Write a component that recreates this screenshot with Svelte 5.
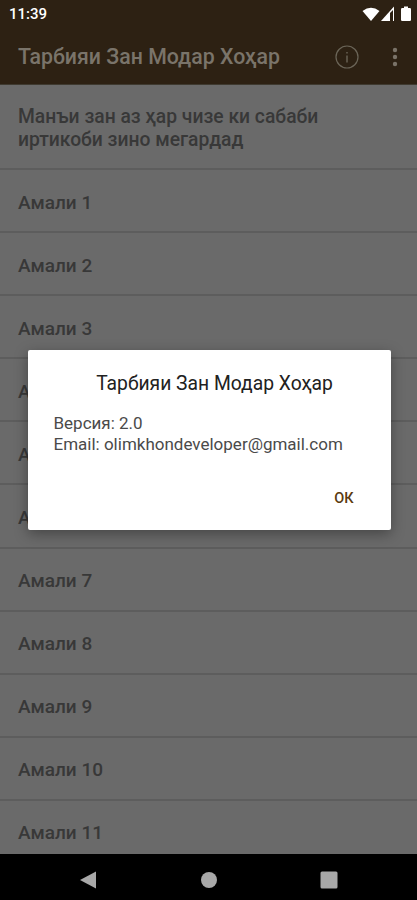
<script>
	const items = ['Амали 1', 'Амали 2', 'Амали 3', 'Амали 4', 'Амали 5', 'Амали 6', 'Амали 7', 'Амали 8', 'Амали 9', 'Амали 10', 'Амали 11'];
</script>

<div class="screen">
	<header>
		<div class="status">
			<span class="time">11:39</span>
			<svg class="status-icons" width="50" height="16" viewBox="0 0 50 16">
				<path d="M0.5 5 Q9 -1.5 17.5 5 L9 15 Z" fill="#fff" />
				<path d="M32 0.5 V15 H19 Z" fill="#fff" />
				<path d="M31 4 V15 H28 V7 Z" fill="#2d2113" />
				<rect x="39" y="2" width="10" height="13" rx="1.2" fill="#fff" />
				<rect x="42" y="0.5" width="4" height="2" fill="#fff" />
			</svg>
		</div>
		<div class="toolbar">
			<span class="title">Тарбияи Зан Модар Хоҳар</span>
			<svg class="info" width="24" height="24" viewBox="0 0 24 24">
				<circle cx="12" cy="12" r="11" fill="none" stroke="#6b6558" stroke-width="1.2" />
				<path d="M12 7 V8.4 M12 10.5 V17.5" stroke="#6b6558" stroke-width="1.4" fill="none" />
			</svg>
			<svg class="more" width="6" height="20" viewBox="0 0 6 20">
				<circle cx="3" cy="3" r="2.2" fill="#7a7368" />
				<circle cx="3" cy="10" r="2.2" fill="#7a7368" />
				<circle cx="3" cy="17" r="2.2" fill="#7a7368" />
			</svg>
		</div>
	</header>

	<ul>
		<li class="first">Манъи зан аз ҳар чизе ки сабаби иртикоби зино мегардад</li>
		{#each items as item}
			<li>{item}</li>
		{/each}
	</ul>

	<nav>
		<svg width="18" height="18" viewBox="0 0 18 18"><path d="M17 0.5 V17.5 L1 9 Z" fill="#a8a8a8" /></svg>
		<svg width="18" height="18" viewBox="0 0 18 18"><circle cx="9" cy="9" r="8" fill="#a8a8a8" /></svg>
		<svg width="18" height="18" viewBox="0 0 18 18"><rect x="0.5" y="0.5" width="17" height="17" rx="1.5" fill="#a8a8a8" /></svg>
	</nav>

	<div class="scrim">
		<div class="dialog">
			<h2>Тарбияи Зан Модар Хоҳар</h2>
			<p>Версия: 2.0<br />Email: olimkhondeveloper@gmail.com</p>
			<div class="actions"><span>ОК</span></div>
		</div>
	</div>
</div>

<style>
	:global(body) {
		margin: 0;
		background: #000;
	}

	.screen {
		position: relative;
		display: flex;
		flex-direction: column;
		width: 417px;
		height: 900px;
		overflow: hidden;
		background: #6a6a6a;
		font-family: Roboto, 'Liberation Sans', sans-serif;
	}

	header {
		flex: none;
		height: 85px;
		background: #2d2113;
		border-bottom: 1px solid #3f3a30;
		box-sizing: border-box;
	}

	.status {
		display: flex;
		align-items: center;
		justify-content: space-between;
		height: 27px;
		padding: 0 5px 0 9px;
	}

	.time {
		font-size: 15px;
		font-weight: 500;
		color: #fff;
	}

	.toolbar {
		display: flex;
		align-items: center;
		height: 57px;
		padding: 2px 19px 0 18px;
		box-sizing: border-box;
	}

	.title {
		flex: 1;
		font-size: 21.3px;
		font-weight: 500;
		color: #7a746a;
	}

	.more {
		margin-left: 33px;
	}

	ul {
		flex: 1;
		min-height: 0;
		overflow: hidden;
		margin: 0;
		padding: 0;
		list-style: none;
	}

	li {
		display: flex;
		align-items: center;
		height: 63.1px;
		padding: 3px 18px 0;
		box-sizing: border-box;
		border-bottom: 2px solid #5d5d5d;
		font-size: 19px;
		font-weight: 500;
		line-height: 23px;
		color: #383838;
	}

	li.first {
		height: 85px;
		padding-right: 60px;
		font-size: 19.3px;
	}

	nav {
		flex: none;
		display: flex;
		align-items: center;
		justify-content: center;
		gap: 102.5px;
		height: 46px;
		padding-top: 6px;
		box-sizing: border-box;
		background: #000;
	}

	.scrim {
		position: absolute;
		inset: 0;
		display: flex;
		justify-content: center;
		pointer-events: none;
	}

	.dialog {
		align-self: flex-start;
		width: 363px;
		height: 180px;
		margin-top: 350px;
		margin-left: 1px;
		padding: 24px 26px 0;
		box-sizing: border-box;
		background: #fff;
		border-radius: 2px;
		box-shadow: 0 4px 14px rgba(0, 0, 0, 0.35);
	}

	h2 {
		margin: 0;
		padding-left: 11px;
		text-align: center;
		font-size: 19.3px;
		font-weight: 400;
		line-height: 20px;
		color: #212121;
	}

	p {
		margin: 19px 0 0;
		font-size: 17px;
		line-height: 21px;
		color: #4a4a4a;
	}

	.actions {
		display: flex;
		justify-content: flex-end;
		margin-top: 34px;
		padding-right: 11px;
		font-size: 14.5px;
		font-weight: 500;
		line-height: 20px;
		color: #5a3a10;
	}
</style>
